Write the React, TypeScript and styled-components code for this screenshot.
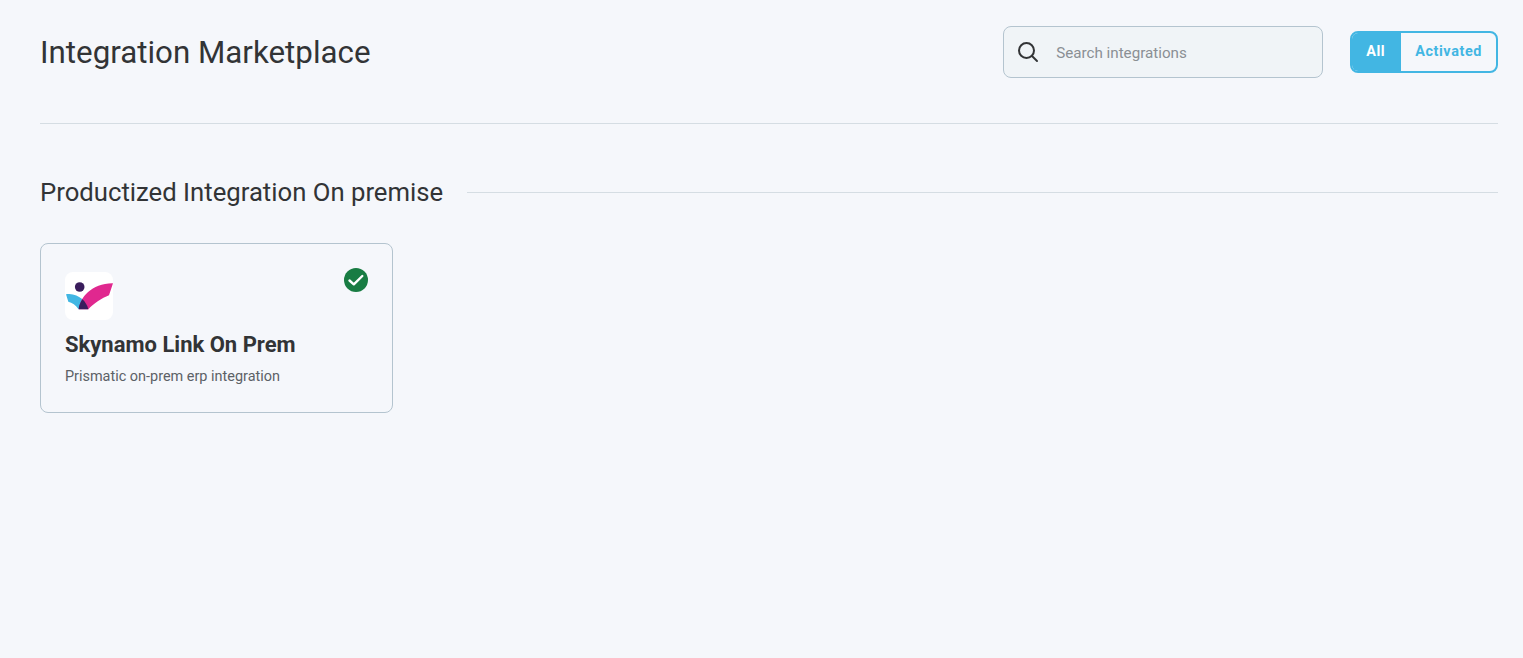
import React, { useState } from "react";
import styled, { createGlobalStyle } from "styled-components";

const GlobalStyle = createGlobalStyle`
  html, body {
    margin: 0;
    padding: 0;
    background: #f5f7fb;
    font-family: Roboto, "Liberation Sans", sans-serif;
  }
`;

const Page = styled.div`
  min-height: 658px;
  padding: 26px 25px 0 40px;
  box-sizing: border-box;
  background: #f5f7fb;
`;

const Header = styled.header`
  display: flex;
  align-items: flex-start;
  justify-content: space-between;
  height: 97px;
  border-bottom: 1px solid #d5dde3;
`;

const Title = styled.h1`
  margin: 6px 0 0;
  font-size: 31.3px;
  line-height: 42px;
  font-weight: 400;
  color: #323436;
`;

const Controls = styled.div`
  display: flex;
  align-items: center;
  gap: 27px;
`;

const SearchBox = styled.label`
  display: flex;
  align-items: center;
  gap: 16px;
  width: 320px;
  height: 52px;
  padding: 0 12px;
  box-sizing: border-box;
  border: 1px solid #b4c4cf;
  border-radius: 8px;
  background: #f0f4f7;
  color: #323436;
`;

const SearchInput = styled.input`
  flex: 1;
  min-width: 0;
  border: none;
  outline: none;
  padding: 2px 0 0;
  background: transparent;
  font-family: inherit;
  font-size: 15.2px;
  color: #323436;

  &::placeholder {
    color: #8a8f94;
    opacity: 1;
  }
`;

const Toggle = styled.div`
  display: flex;
  height: 42px;
  box-sizing: border-box;
  border: 2px solid #42b6e3;
  border-radius: 8px;
  overflow: hidden;
`;

const ToggleButton = styled.button<{ $active?: boolean }>`
  border: none;
  margin: 0;
  padding: 0 14px 2px;
  min-width: 49px;
  text-align: left;
  font-family: inherit;
  font-size: 14.4px;
  font-weight: 700;
  letter-spacing: 0.6px;
  height: 38px;
  cursor: pointer;
  background: ${(p) => (p.$active ? "#42b6e3" : "transparent")};
  color: ${(p) => (p.$active ? "#ffffff" : "#42b6e3")};
`;

const SectionHeading = styled.div`
  display: flex;
  align-items: center;
  gap: 24px;
  margin-top: 51px;
`;

const SectionTitle = styled.h2`
  margin: 0;
  font-size: 25.7px;
  line-height: 34px;
  font-weight: 400;
  color: #323436;
  white-space: nowrap;
`;

const SectionRule = styled.div`
  flex: 1;
  height: 1px;
  background: #d5dde3;
`;

const CardGrid = styled.div`
  display: grid;
  grid-template-columns: 353px;
  margin-top: 34px;
`;

const Card = styled.article`
  position: relative;
  height: 170px;
  padding: 28px 24px 0;
  box-sizing: border-box;
  border: 1px solid #b4c4cf;
  border-radius: 8px;
`;

const StatusBadge = styled.span`
  position: absolute;
  top: 24px;
  right: 24px;
  width: 24px;
  height: 24px;
  display: block;
`;

const LogoTile = styled.div`
  width: 48px;
  height: 48px;
  border-radius: 8px;
  background: #ffffff;
  overflow: hidden;
`;

const CardTitle = styled.h3`
  margin: 11px 0 0;
  font-size: 22px;
  line-height: 28px;
  font-weight: 700;
  color: #323436;
`;

const CardText = styled.p`
  margin: 8px 0 0;
  font-size: 14.45px;
  line-height: 20px;
  color: #5c6166;
`;

const SearchIcon = () => (
  <svg width="24" height="24" viewBox="0 0 24 24" fill="none" stroke="currentColor" strokeWidth="2" strokeLinecap="round">
    <circle cx="10.500" cy="10.500" r="7.500" />
    <path d="M16 16l5 5" />
  </svg>
);

const CheckIcon = () => (
  <svg width="24" height="24" viewBox="0 0 24 24" fill="none">
    <circle cx="12" cy="12" r="12" fill="#187c43" />
    <path d="M5.500 12.500l4.300 3.800 8.500-8.300" stroke="#ffffff" strokeWidth="2.400" strokeLinecap="round" strokeLinejoin="round" />
  </svg>
);

const SkynamoLogo = () => (
  <svg width="48" height="48" viewBox="0 0 48 48">
    <path d="M1 22.300 C7 21 13 23.500 17.500 27.300 L13.500 37.300 C11 33 7 30.500 3.300 29.700 Z" fill="#42b6e3" />
    <path d="M48 11.300 L44 23.300 C37 26 28 32 23.300 37.300 L14 37.300 C14.500 26 27 11 48 11.300 Z" fill="#e0288f" />
    <path d="M17.500 27.300 C20 30 22.500 33 23.300 37.300 L13.500 37.300 C14 33 15.500 30 17.500 27.300 Z" fill="#3a1d5c" />
    <circle cx="14.700" cy="15" r="4.800" fill="#3a1d5c" />
  </svg>
);

export default function App() {
  const [filter, setFilter] = useState("all");
  return (
    <Page>
      <GlobalStyle />
      <Header>
        <Title>Integration Marketplace</Title>
        <Controls>
          <SearchBox>
            <SearchIcon />
            <SearchInput placeholder="Search integrations" />
          </SearchBox>
          <Toggle>
            <ToggleButton $active={filter === "all"} onClick={() => setFilter("all")}>All</ToggleButton>
            <ToggleButton $active={filter === "activated"} onClick={() => setFilter("activated")}>Activated</ToggleButton>
          </Toggle>
        </Controls>
      </Header>
      <SectionHeading>
        <SectionTitle>Productized Integration On premise</SectionTitle>
        <SectionRule />
      </SectionHeading>
      <CardGrid>
        <Card>
          <StatusBadge>
            <CheckIcon />
          </StatusBadge>
          <LogoTile>
            <SkynamoLogo />
          </LogoTile>
          <CardTitle>Skynamo Link On Prem</CardTitle>
          <CardText>Prismatic on-prem erp integration</CardText>
        </Card>
      </CardGrid>
    </Page>
  );
}
